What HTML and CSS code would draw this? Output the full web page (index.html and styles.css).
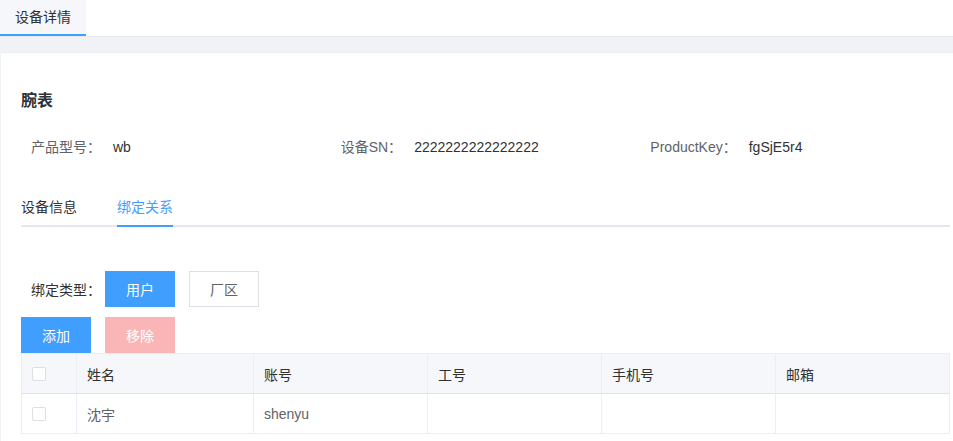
FILE: index.html
```html
<!DOCTYPE html>
<html lang="zh-CN">
<head>
    <meta charset="UTF-8">
    <meta name="viewport" content="width=device-width, initial-scale=1.0">
    <title>设备详情</title>
    <link rel="stylesheet" href="styles.css">
</head>
<body>
    <header class="page-tabs">
        <div class="page-tab active">设备详情</div>
    </header>

    <main class="main">
        <div class="card">
            <h2 class="device-title">腕表</h2>

            <div class="info-row">
                <div class="info-item"><span class="info-label">产品型号：</span><span class="info-value">wb</span></div>
                <div class="info-item"><span class="info-label">设备SN：</span><span class="info-value">2222222222222222</span></div>
                <div class="info-item"><span class="info-label">ProductKey：</span><span class="info-value">fgSjE5r4</span></div>
            </div>

            <div class="tabs">
                <div class="tab">设备信息</div>
                <div class="tab active">绑定关系</div>
            </div>

            <div class="bind-type">
                <span class="bind-label">绑定类型：</span>
                <button class="btn btn-primary">用户</button>
                <button class="btn btn-plain">厂区</button>
            </div>

            <div class="actions">
                <button class="btn btn-primary">添加</button>
                <button class="btn btn-danger-disabled" disabled>移除</button>
            </div>

            <table class="bind-table">
                <colgroup>
                    <col style="width:55px">
                    <col style="width:177px">
                    <col style="width:174px">
                    <col style="width:174px">
                    <col style="width:174px">
                    <col>
                </colgroup>
                <thead>
                    <tr>
                        <th><span class="checkbox"></span></th>
                        <th>姓名</th>
                        <th>账号</th>
                        <th>工号</th>
                        <th>手机号</th>
                        <th>邮箱</th>
                    </tr>
                </thead>
                <tbody>
                    <tr>
                        <td><span class="checkbox"></span></td>
                        <td>沈宇</td>
                        <td>shenyu</td>
                        <td></td>
                        <td></td>
                        <td></td>
                    </tr>
                </tbody>
            </table>
        </div>
    </main>
</body>
</html>
```

FILE: styles.css
```css
* {
    box-sizing: border-box;
}
body {
    margin: 0;
    padding: 0;
    font-family: "Liberation Sans", "Noto Sans CJK SC", sans-serif;
    font-size: 14px;
    color: #303133;
    background: #f0f2f5;
    overflow: hidden;
}
.page-tabs {
    display: flex;
    height: 37px;
    background: #fff;
    border-bottom: 1px solid #e6e9ee;
}
.page-tab {
    height: 36px;
    line-height: 34px;
    padding: 0 15px;
    color: #303133;
    background: #f5f7fa;
    border-bottom: 2px solid #409eff;
}
.main {
    padding: 15px 0 0 1px;
}
.card {
    background: #fff;
    border-top: 1px solid #ebeef5;
    padding: 36px 3px 20px 20px;
    min-height: 400px;
}
.device-title {
    margin: 0;
    font-size: 16px;
    font-weight: bold;
    line-height: 24px;
    color: #303133;
}
.info-row {
    display: flex;
    margin-top: 24px;
    line-height: 20px;
}
.info-item {
    width: 310px;
    padding-left: 10px;
}
.info-label {
    color: #606266;
    margin-right: 12px;
}
.info-value {
    color: #303133;
}
.tabs {
    display: flex;
    margin-top: 30px;
    border-bottom: 2px solid #e4e7ed;
}
.tab {
    height: 40px;
    line-height: 40px;
    padding: 0 20px;
    margin-bottom: -2px;
    color: #303133;
}
.tab:first-child {
    padding-left: 0;
}
.tab.active {
    color: #409eff;
    padding: 0;
    margin-left: 20px;
    border-bottom: 2px solid #409eff;
}
.bind-type {
    display: flex;
    align-items: center;
    margin-top: 44px;
}
.bind-label {
    padding-left: 10px;
    width: 84px;
    color: #303133;
}
.actions {
    display: flex;
    margin-top: 10px;
}
.btn {
    width: 70px;
    height: 36px;
    margin-right: 14px;
    padding: 0;
    font-family: inherit;
    font-size: 14px;
    border: 1px solid #dcdfe6;
    background: #fff;
    color: #606266;
    cursor: pointer;
}
.btn-primary {
    background: #409eff;
    border-color: #409eff;
    color: #fff;
}
.btn-danger-disabled {
    background: #fab6b6;
    border-color: #fab6b6;
    color: #fff;
    cursor: not-allowed;
}
.bind-table {
    width: 929px;
    table-layout: fixed;
    border-collapse: collapse;
    border: 1px solid #ebeef5;
}
.bind-table th,
.bind-table td {
    height: 40px;
    padding: 0 10px;
    text-align: left;
    font-weight: normal;
    border-right: 1px solid #ebeef5;
}
.bind-table th {
    background: #f5f7fa;
    color: #303133;
    border-bottom: 1px solid #dfe4ec;
}
.bind-table td {
    color: #606266;
    border-bottom: 1px solid #ebeef5;
}
.checkbox {
    display: block;
    width: 14px;
    height: 14px;
    border: 1px solid #dcdfe6;
    border-radius: 2px;
    background: #fff;
}
```
